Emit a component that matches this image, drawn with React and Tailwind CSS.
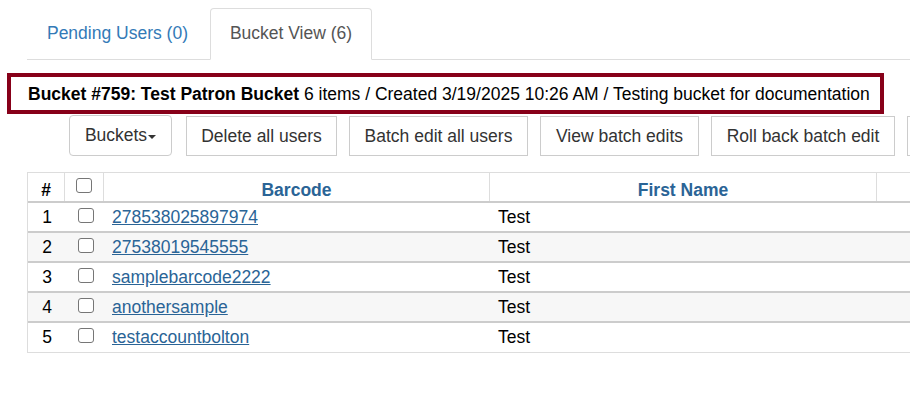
import React from 'react'

const rows = [
  { n: 1, barcode: '278538025897974', first: 'Test' },
  { n: 2, barcode: '27538019545555', first: 'Test' },
  { n: 3, barcode: 'samplebarcode2222', first: 'Test' },
  { n: 4, barcode: 'anothersample', first: 'Test' },
  { n: 5, barcode: 'testaccountbolton', first: 'Test' },
]

function Box() {
  return <span className="block w-[16px] h-[15px] border border-[#767676] rounded-[3px] bg-white" />
}

export default function App() {
  return (
    <div className="w-full min-h-[399px] overflow-hidden bg-white text-[17.5px] text-[#333] font-['Liberation_Sans',Arial,sans-serif]">
      {/* Tabs */}
      <div className="pt-2 pl-[27px]">
        <div className="flex h-[52px] border-b border-[#ddd]">
          <div className="h-[51px] w-[181px] shrink-0 flex items-center justify-center text-[#337ab7]">
            Pending Users (0)
          </div>
          <div className="ml-[2px] h-[52px] w-[162px] shrink-0 flex items-center justify-center pb-px text-[#555] bg-white border border-[#ddd] border-b-white rounded-t-[4px]">
            Bucket View (6)
          </div>
        </div>
      </div>

      {/* Bucket heading */}
      <div className="mt-[13px] ml-[7px] w-[877px] h-[41px] border-4 border-[#870019] flex items-center pl-[17px] pt-[2px] text-black whitespace-nowrap">
        <span className="font-bold">Bucket #759: Test Patron Bucket</span>
        <span>&nbsp;6 items / Created 3/19/2025 10:26 AM / Testing bucket for documentation</span>
      </div>

      {/* Actions */}
      <div className="mt-px ml-[69px] flex items-start gap-3 whitespace-nowrap">
        <button className="h-[41px] w-[103px] shrink-0 mr-[2px] flex items-center justify-center border border-[#ccc] rounded-[4px] bg-white text-[#333]">
          Buckets
          <span className="ml-px mt-[2px] w-0 h-0 border-x-[4px] border-t-[4px] border-x-transparent border-t-[#333]" />
        </button>
        <button className="h-[40px] w-[151px] shrink-0 mt-px border border-[#ccc] bg-white text-[#333]">Delete all users</button>
        <button className="h-[40px] w-[179px] shrink-0 mt-px border border-[#ccc] bg-white text-[#333]">Batch edit all users</button>
        <button className="h-[40px] w-[159px] shrink-0 mt-px border border-[#ccc] bg-white text-[#333]">View batch edits</button>
        <button className="h-[40px] w-[184px] shrink-0 mt-px border border-[#ccc] bg-white text-[#333]">Roll back batch edit</button>
        <button className="h-[40px] w-[120px] shrink-0 mt-px border border-[#ccc] bg-white" aria-label="More" />
      </div>

      {/* Table */}
      <div className="mt-[16px] ml-[27px] w-[1300px] border-l border-t border-[#ddd]">
        <div className="flex h-[30px] border-b-2 border-[#ccc] font-bold">
          <div className="w-[37px] shrink-0 border-r border-[#ddd] text-center pt-[4px] text-black">#</div>
          <div className="w-[39px] shrink-0 border-r border-[#ddd] flex justify-center pt-[5px]">
            <Box />
          </div>
          <div className="w-[386px] shrink-0 border-r border-[#ddd] text-center pt-[4px] text-[#2a6496]">Barcode</div>
          <div className="w-[387px] shrink-0 border-r border-[#ddd] text-center pt-[4px] text-[#2a6496]">First Name</div>
          <div className="w-[387px] shrink-0 border-r border-[#ddd]" />
        </div>
        {rows.map((r, i) => (
          <div
            key={r.n}
            className={`flex h-[30px] text-black ${i % 2 === 1 ? 'bg-[#f7f7f7]' : 'bg-white'} ${
              i === rows.length - 1 ? 'border-b border-[#ddd]' : 'border-b-2 border-[#ccc]'
            }`}
          >
            <div className="w-[38px] shrink-0 text-center pt-[1px]">{r.n}</div>
            <div className="w-[39px] shrink-0 flex justify-center pt-[5px]">
              <Box />
            </div>
            <div className="w-[386px] shrink-0 pl-[7px] pt-[1px]">
              <a href="#" className="text-[#2a6496] underline">{r.barcode}</a>
            </div>
            <div className="w-[387px] shrink-0 pl-[7px] pt-[1px]">{r.first}</div>
          </div>
        ))}
      </div>
    </div>
  )
}
